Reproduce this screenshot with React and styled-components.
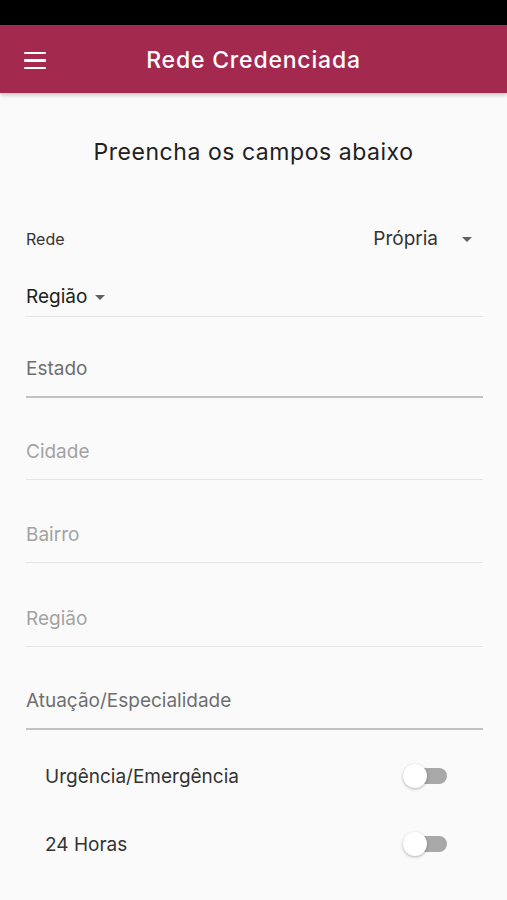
import React from "react";
import styled, { createGlobalStyle } from "styled-components";

const Global = createGlobalStyle`
  html, body { margin: 0; padding: 0; background: #fafafa; }
  body { font-family: Inter, Roboto, "Noto Sans", Arial, sans-serif; -webkit-font-smoothing: antialiased; }
  * { box-sizing: border-box; }
`;

const Screen = styled.div`
  width: 507px;
  height: 900px;
  background: #fafafa;
  display: flex;
  flex-direction: column;
  overflow: hidden;
`;

const StatusBar = styled.div`
  height: 25px;
  background: #000;
`;

const AppBar = styled.header`
  position: relative;
  height: 68px;
  background: #a3294f;
  display: flex;
  align-items: center;
  justify-content: center;
  box-shadow: 0 2px 4px rgba(0, 0, 0, 0.22);
  z-index: 1;
`;

const MenuButton = styled.div`
  position: absolute;
  left: 24px;
  top: 27px;
  width: 22px;
  display: flex;
  flex-direction: column;
  gap: 5px;
`;

const MenuLine = styled.span`
  display: block;
  height: 2.4px;
  background: #fff;
  border-radius: 1px;
`;

const Title = styled.h1`
  margin: 0;
  color: #fff;
  font-size: 23px;
  font-weight: 500;
  letter-spacing: 0.8px;
  transform: translateY(1px);
`;

const Content = styled.div`
  padding: 0 24px 0 26px;
  display: flex;
  flex-direction: column;
`;

const Heading = styled.h2`
  margin: 45px 0 0;
  text-align: center;
  line-height: 28px;
  font-size: 23px;
  font-weight: 400;
  letter-spacing: 0.55px;
  color: #212121;
  padding-right: 2px;
`;

const RedeRow = styled.div`
  margin-top: 53px;
  height: 40px;
  display: flex;
  align-items: center;
  justify-content: space-between;
`;

const SmallLabel = styled.span`
  font-size: 16px;
  color: #333;
`;

const Select = styled.div`
  display: flex;
  align-items: center;
  gap: ${(p) => p.$gap}px;
  margin-right: ${(p) => p.$mr || 0}px;
`;

const SelectText = styled.span`
  font-size: 19px;
  line-height: 24px;
  color: ${(p) => p.$color || "#333"};
`;

const Caret = styled.span`
  width: 0;
  height: 0;
  border-left: 5px solid transparent;
  border-right: 5px solid transparent;
  border-top: 5px solid #616161;
  margin-top: 1px;
`;

const RegionRow = styled.div`
  height: 58px;
  display: flex;
  align-items: flex-end;
  padding-bottom: 7px;
  border-bottom: 1px solid #e4e4e4;
`;

const Field = styled.div`
  height: ${(p) => p.$h}px;
  display: flex;
  align-items: flex-end;
  padding-bottom: 16px;
  border-bottom: ${(p) => (p.$active ? "2px solid #c2c2c2" : "1px solid #e4e4e4")};
`;

const FieldText = styled.span`
  font-size: 19px;
  line-height: 22px;
  color: ${(p) => (p.$active ? "#6f6f6f" : "#a3a3a3")};
`;

const Toggles = styled.div`
  margin-top: 12px;
  padding: 0 60px 0 45px;
  display: flex;
  flex-direction: column;
`;

const ToggleRow = styled.div`
  height: 68px;
  display: flex;
  align-items: center;
  justify-content: space-between;
`;

const ToggleLabel = styled.span`
  font-size: 19px;
  color: #333;
`;

const Switch = styled.div`
  position: relative;
  width: 44px;
  height: 24px;
  display: flex;
  align-items: center;
`;

const Track = styled.div`
  margin-left: 4px;
  width: 40px;
  height: 16px;
  border-radius: 8px;
  background: #a8a8a8;
`;

const Thumb = styled.div`
  position: absolute;
  left: 0;
  top: 0;
  width: 24px;
  height: 24px;
  border-radius: 50%;
  background: #fff;
  box-shadow: 0 1px 3px rgba(0, 0, 0, 0.3);
`;

const fields = [
  { label: "Estado", active: true, h: 81 },
  { label: "Cidade", active: false, h: 82 },
  { label: "Bairro", active: false, h: 83 },
  { label: "Região", active: false, h: 84 },
  { label: "Atuação/Especialidade", active: true, h: 83 },
];

export default function App() {
  return (
    <Screen>
      <Global />
      <StatusBar />
      <AppBar>
        <MenuButton>
          <MenuLine />
          <MenuLine />
          <MenuLine />
        </MenuButton>
        <Title>Rede Credenciada</Title>
      </AppBar>
      <Content>
        <Heading>Preencha os campos abaixo</Heading>
        <RedeRow>
          <SmallLabel>Rede</SmallLabel>
          <Select $gap={24} $mr={11}>
            <SelectText>Própria</SelectText>
            <Caret />
          </Select>
        </RedeRow>
        <RegionRow>
          <Select $gap={8}>
            <SelectText $color="#212121">Região</SelectText>
            <Caret />
          </Select>
        </RegionRow>
        {fields.map((f) => (
          <Field key={f.label} $active={f.active} $h={f.h}>
            <FieldText $active={f.active}>{f.label}</FieldText>
          </Field>
        ))}
      </Content>
      <Toggles>
        <ToggleRow>
          <ToggleLabel>Urgência/Emergência</ToggleLabel>
          <Switch>
            <Track />
            <Thumb />
          </Switch>
        </ToggleRow>
        <ToggleRow>
          <ToggleLabel>24 Horas</ToggleLabel>
          <Switch>
            <Track />
            <Thumb />
          </Switch>
        </ToggleRow>
      </Toggles>
    </Screen>
  );
}
